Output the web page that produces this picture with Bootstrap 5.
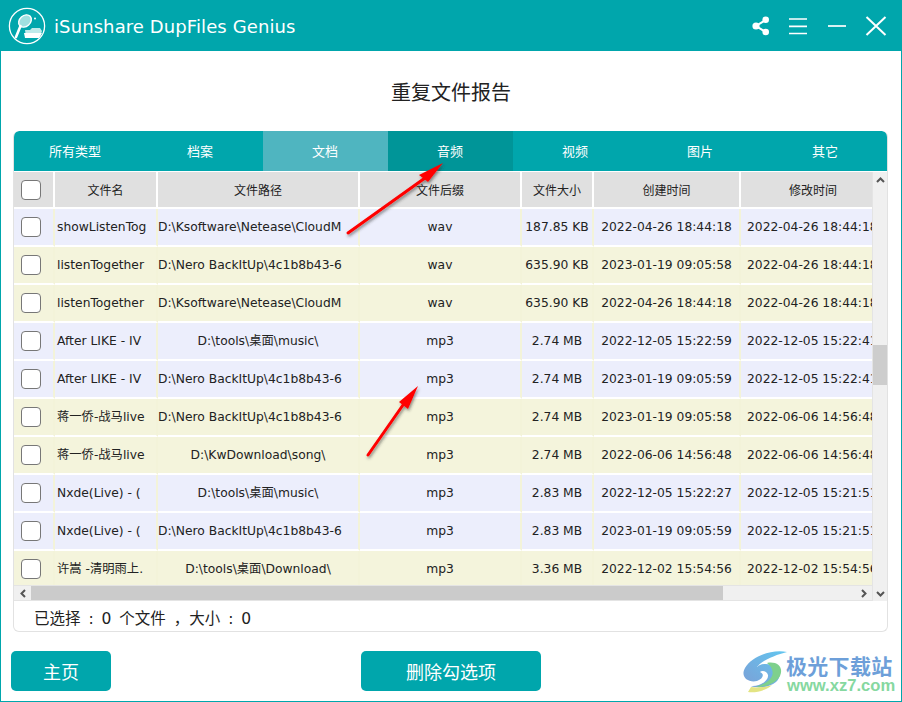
<!DOCTYPE html>
<html lang="zh"><head><meta charset="utf-8"><title>iSunshare DupFiles Genius</title>
<link href="https://cdn.jsdelivr.net/npm/bootstrap@5.3.0/dist/css/bootstrap.min.css" rel="stylesheet">
<style>
html,body{margin:0;height:100%;background:#fff}
body{font-family:"DejaVu Sans","Noto Sans CJK SC",sans-serif;color:#111;overflow:hidden}
.win{width:902px;height:702px;position:relative;border:solid #00a6ac;border-width:0 1px 1px 1px;display:flex;flex-direction:column}
.titlebar{height:51px;background:#00a6ac;margin:0 -1px;padding:0 14px 0 8px;flex:none}
.brand{font-size:18px;color:#fff;margin-left:8px;letter-spacing:.1px;padding-top:2px}
.wbtn{display:block}
.g1{margin-left:18px}.g2{margin-left:19px}.g3{margin-left:17px}
.ptitle{font-size:20px;text-align:center;line-height:30px;margin:26px 0 24px;font-family:"Noto Sans CJK SC",sans-serif;color:#222}
.panel{margin:0 13px 0 12px;height:501px;border:1px solid #e2e2e2;border-top:0;border-radius:6px;display:flex;flex-direction:column;overflow:hidden}
.tabsbar{height:40px;background:#00a6ac;margin:0 -1px;flex:none;border-radius:6px 6px 0 0;overflow:hidden}
.tabitem{width:125px;text-align:center;color:#fff;font-size:13px;line-height:40px;font-family:"Noto Sans CJK SC",sans-serif;flex:none;padding-right:1px}
.tabitem.cur{background:#4fb5c0}
.tabitem.hov{background:#009598}
.midrow{height:429px;flex:none;margin-top:1px}
.leftcol{width:858px;flex:none}
.viewport{height:413px;overflow:hidden;flex:none;background:#fff}
.gridt{table-layout:fixed;border-collapse:separate;border-spacing:0;width:899px;margin:0;font-size:12.3px}
.c1{width:41px}.c2{width:103px}.c3{width:202px}.c4{width:162px}.c5{width:72px}.c6{width:147px}.c7{width:172px}
.gridt th,.gridt td{padding:0;text-align:center;white-space:nowrap;overflow:hidden;vertical-align:middle;box-shadow:none}
.gridt th{height:37px;background:#e0e0e0;font-weight:400;font-size:12px;font-family:"Noto Sans CJK SC",sans-serif;border-right:2px solid #fff;border-bottom:2px solid #fff;color:#222}
.gridt td{height:38px;border-right:2px solid #f3f3d9;border-bottom:2px solid #fff;color:#222}
.gridt tr.ba td{background:#eceefc}
.gridt tr.ye td{background:#f4f4dc}
.gridt .lft{text-align:left;padding-left:2px}
.gridt .path{text-align:left;padding-left:0}
.gridt .dlast{text-align:left;padding-left:6px}
.gridt .hlast{text-align:left;padding-left:48px}
.ck{display:block;width:20px;height:20px;border:1.5px solid #777;border-radius:4px;background:#fff;margin:0 0 0 7px}
.vbar{width:16px;background:#f0f0f0;flex:none;border-left:1px solid #e4e4e4}
.hbar{height:16px;background:#f0f0f0;flex:none;border-top:1px solid #e4e4e4;border-bottom:1px solid #e4e4e4}
.vthumb{height:40px;width:15px;background:#cdcdcd;margin-top:158px}
.hthumb{width:692px;background:#cbcbcb;height:100%}
.arr{width:17px;height:15px;flex:none;display:flex;align-items:center;justify-content:center}
.vbar .arr{width:15px}
.statusline{height:30px;font-size:15.5px;padding:2px 0 0 20px;line-height:32px;flex:none;color:#222;word-spacing:3px;white-space:nowrap}
.footrow{margin:19px 0 0 10px;flex:none}
.mainbtn{background:#00a6ac;border:0;border-radius:5px;color:#fff;height:40px;font-size:18px;font-family:"Noto Sans CJK SC",sans-serif;padding:0}
.wa{width:100px}.wb{width:180px;margin-left:250px}
.overlay{position:absolute;left:-1px;top:0;pointer-events:none}
.wm{position:absolute;left:741px;top:650px;width:155px;height:46px}
.wm1{position:absolute;left:44px;top:4px;font-size:21px;font-weight:700;color:#6d9fd9;line-height:22px;font-family:"Noto Sans CJK SC",sans-serif;letter-spacing:.3px;white-space:nowrap}
.wm2{position:absolute;left:45px;top:28px;font-size:16.6px;font-weight:700;color:#86d8a0;line-height:16px;font-family:"Liberation Sans",sans-serif;white-space:nowrap}
</style></head><body>
<div class="win">
<div class="titlebar d-flex align-items-center">
<svg width="38" height="38" viewBox="0 0 38 38" fill="none"><circle cx="19" cy="19" r="17.6" stroke="#fff" stroke-width="1.3"/><ellipse cx="17" cy="14" rx="7" ry="5.4" transform="rotate(-42 17 14)" fill="#9fe0e0" stroke="#fff" stroke-width="1.4"/><path d="M12.500 19 8 30" stroke="#fff" stroke-width="2.600" stroke-linecap="round"/><path d="M17 23h5l2-2h8l2 3-2 6H18z" fill="#bfeaea"/><path d="M16 26h18l-3 5H17z" fill="#fff"/><circle cx="27" cy="11.500" r="1" fill="#fff"/></svg>
<span class="brand">iSunshare DupFiles Genius</span>
<div class="ms-auto d-flex align-items-center">
<svg class="wbtn" width="18" height="20" viewBox="0 0 18 20"><path d="M13.500 4 4 10l9.500 6" fill="none" stroke="#fff" stroke-width="2"/><circle cx="13.700" cy="3.800" r="3.300" fill="#fff"/><circle cx="4" cy="10" r="3.600" fill="#fff"/><circle cx="13.700" cy="16" r="3.300" fill="#fff"/></svg>
<svg class="wbtn g1" width="20" height="18" viewBox="0 0 20 18"><path d="M1 2h18M1 9.300h18M1 16.500h18" stroke="#fff" stroke-width="1.700"/></svg>
<svg class="wbtn g2" width="20" height="18" viewBox="0 0 20 18"><path d="M1 9h18" stroke="#fff" stroke-width="1.700"/></svg>
<svg class="wbtn g3" width="24" height="22" viewBox="0 0 24 22"><path d="M2.500 2 21.500 20M21.500 2 2.500 20" stroke="#fff" stroke-width="2"/></svg>
</div></div>
<div class="ptitle">重复文件报告</div>
<div class="panel">
<div class="tabsbar d-flex"><div class="tabitem">所有类型</div><div class="tabitem">档案</div><div class="tabitem cur">文档</div><div class="tabitem hov">音频</div><div class="tabitem">视频</div><div class="tabitem">图片</div><div class="tabitem">其它</div></div>
<div class="midrow d-flex">
<div class="leftcol d-flex flex-column">
<div class="viewport">
<table class="table gridt"><colgroup><col class="c1"><col class="c2"><col class="c3"><col class="c4"><col class="c5"><col class="c6"><col class="c7"></colgroup>
<thead><tr><th><span class="ck"></span></th><th>文件名</th><th>文件路径</th><th>文件后缀</th><th>文件大小</th><th>创建时间</th><th class="hlast">修改时间</th></tr></thead>
<tbody>
<tr class="ba"><td><span class="ck"></span></td><td class="lft">showListenTog</td><td class="path">D:\Ksoftware\Netease\CloudM</td><td>wav</td><td>187.85 KB</td><td>2022-04-26 18:44:18</td><td class="dlast">2022-04-26 18:44:18</td></tr>
<tr class="ye"><td><span class="ck"></span></td><td class="lft">listenTogether</td><td class="path">D:\Nero BackItUp\4c1b8b43-6</td><td>wav</td><td>635.90 KB</td><td>2023-01-19 09:05:58</td><td class="dlast">2022-04-26 18:44:18</td></tr>
<tr class="ye"><td><span class="ck"></span></td><td class="lft">listenTogether</td><td class="path">D:\Ksoftware\Netease\CloudM</td><td>wav</td><td>635.90 KB</td><td>2022-04-26 18:44:18</td><td class="dlast">2022-04-26 18:44:18</td></tr>
<tr class="ba"><td><span class="ck"></span></td><td class="lft">After LIKE - IV</td><td>D:\tools\桌面\music\</td><td>mp3</td><td>2.74 MB</td><td>2022-12-05 15:22:59</td><td class="dlast">2022-12-05 15:22:41</td></tr>
<tr class="ba"><td><span class="ck"></span></td><td class="lft">After LIKE - IV</td><td class="path">D:\Nero BackItUp\4c1b8b43-6</td><td>mp3</td><td>2.74 MB</td><td>2023-01-19 09:05:59</td><td class="dlast">2022-12-05 15:22:41</td></tr>
<tr class="ye"><td><span class="ck"></span></td><td class="lft">蒋一侨-战马live</td><td class="path">D:\Nero BackItUp\4c1b8b43-6</td><td>mp3</td><td>2.74 MB</td><td>2023-01-19 09:05:58</td><td class="dlast">2022-06-06 14:56:48</td></tr>
<tr class="ye"><td><span class="ck"></span></td><td class="lft">蒋一侨-战马live</td><td>D:\KwDownload\song\</td><td>mp3</td><td>2.74 MB</td><td>2022-06-06 14:56:48</td><td class="dlast">2022-06-06 14:56:48</td></tr>
<tr class="ba"><td><span class="ck"></span></td><td class="lft">Nxde(Live) - (</td><td>D:\tools\桌面\music\</td><td>mp3</td><td>2.83 MB</td><td>2022-12-05 15:22:27</td><td class="dlast">2022-12-05 15:21:51</td></tr>
<tr class="ba"><td><span class="ck"></span></td><td class="lft">Nxde(Live) - (</td><td class="path">D:\Nero BackItUp\4c1b8b43-6</td><td>mp3</td><td>2.83 MB</td><td>2023-01-19 09:05:59</td><td class="dlast">2022-12-05 15:21:51</td></tr>
<tr class="ye"><td><span class="ck"></span></td><td class="lft">许嵩 -清明雨上.</td><td>D:\tools\桌面\Download\</td><td>mp3</td><td>3.36 MB</td><td>2022-12-02 15:54:56</td><td class="dlast">2022-12-02 15:54:56</td></tr>
</tbody></table>
</div>
<div class="hbar d-flex"><div class="arr"><svg width="6" height="9" viewBox="0 0 6 9"><path d="M5 1 1.500 4.500 5 8" fill="none" stroke="#555" stroke-width="2"/></svg></div><div class="hthumb"></div><div class="arr ms-auto"><svg width="6" height="9" viewBox="0 0 6 9"><path d="M1 1 4.500 4.500 1 8" fill="none" stroke="#555" stroke-width="2"/></svg></div></div>
</div>
<div class="vbar d-flex flex-column"><div class="arr"><svg width="9" height="6" viewBox="0 0 9 6"><path d="M1 5 4.500 1.500 8 5" fill="none" stroke="#555" stroke-width="2"/></svg></div><div class="vthumb"></div><div class="arr mt-auto"><svg width="9" height="6" viewBox="0 0 9 6"><path d="M1 1 4.500 4.500 8 1" fill="none" stroke="#555" stroke-width="2"/></svg></div></div>
</div>
<div class="statusline">已选择 : 0 个文件 ，大小 : 0</div>
</div>
<div class="footrow d-flex"><button class="btn mainbtn wa">主页</button><button class="btn mainbtn wb">删除勾选项</button></div>
<svg class="overlay" width="902" height="702" viewBox="0 0 902 702" fill="#f00"><defs><filter id="sh" x="-20%" y="-20%" width="140%" height="140%"><feDropShadow dx="1" dy="2" stdDeviation="1.500" flood-color="#333" flood-opacity=".55"/></filter></defs><g filter="url(#sh)"><path d="M348 233 425 178" stroke="#f00" stroke-width="3" stroke-linecap="round"/><path d="M443 163 419 175 428 182z"/><path d="M368 455 403 405" stroke="#f00" stroke-width="3" stroke-linecap="round"/><path d="M418 386 399 402 408 409z"/></g></svg>
<div class="wm"><svg width="46" height="44" viewBox="0 0 46 44" fill="none"><defs><linearGradient id="wb" x1="1" y1="0" x2="0" y2="1"><stop offset="0" stop-color="#62c6f0"/><stop offset="1" stop-color="#7c9fd6"/></linearGradient></defs><path d="M45 2C30-1 10 6 3 18c-5 9 3 15 12 13 6-2 8-7 3-9 2-2 7-1 8 3 1 6-9 12-17 11 8 3 19 1 25-4 5-5 5-11 0-15-6-4-15-4-19 0C19 11 33 5 45 2z" fill="url(#wb)"/><path d="M25 13c10-2 17 4 13 13-4 7-14 11-24 11 8-3 14-6 16-11 2-5-1-10-5-13z" fill="#7ed08c"/><path d="M6 42c9 1 19-2 24-7-6 2-14 3-21 2z" fill="#e3e483"/></svg><span class="wm1">极光下载站</span><span class="wm2">www.xz7.com</span></div>
</div>
</body></html>
